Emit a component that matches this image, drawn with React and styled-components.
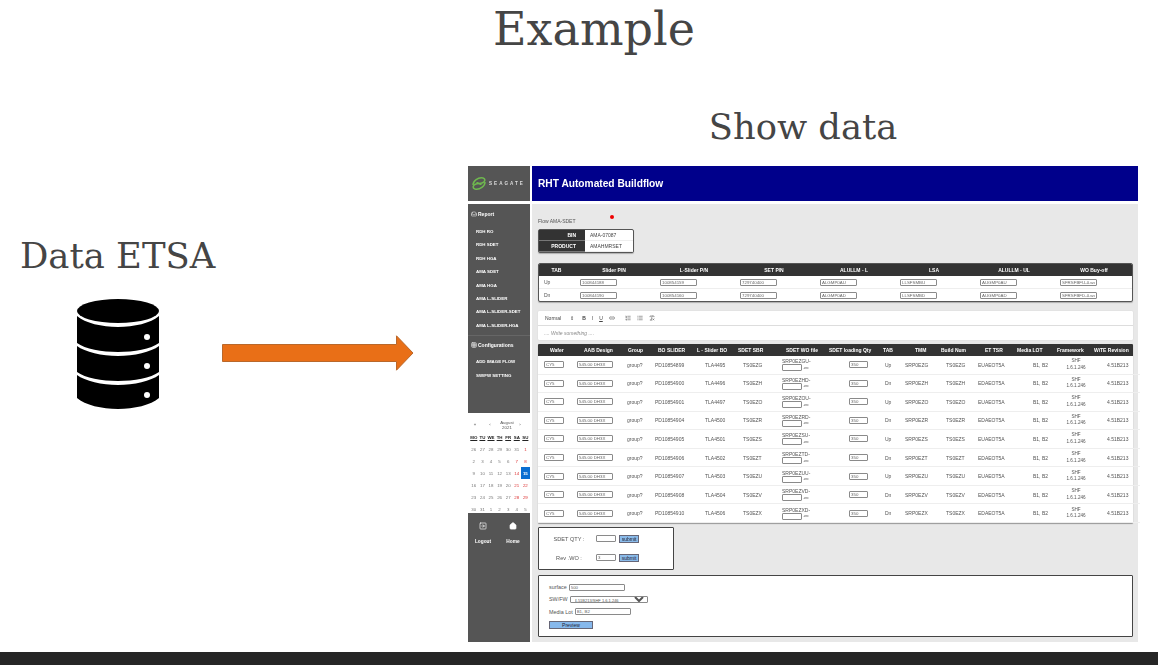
import React from 'react';
import styled, { createGlobalStyle } from 'styled-components';
import { Link2, List, ListOrdered, RemoveFormatting, Grid3x3, SquareArrowRight, Home, Inbox } from 'lucide-react';

const Global = createGlobalStyle`
    html, body { margin: 0; padding: 0; background: #fff; overflow: hidden; }
    * { box-sizing: border-box; }
`

const Page = styled.div`
    width: 1158px;
    height: 665px;
    display: flex;
    flex-direction: column;
    font-family: "Liberation Sans", Arial, sans-serif;
`

const Slide = styled.div`
    height: 652px;
    flex: none;
`

const SlideTitle = styled.div`
    font-family: "DejaVu Serif", serif;
    color: #454545;
    font-size: ${p => p.size}px;
    line-height: 1;
    white-space: nowrap;
`

const TitleRow = styled.div`
    height: 104px;
    padding: 6px 0 0 493px;
`

const Stage = styled.div`
    display: flex;
    align-items: flex-start;
`

const DataColumn = styled.div`
    width: 222px;
    flex: none;
    padding: 134px 0 0 20px;
`

const DbIcon = styled.svg`
    display: block;
    margin: 26px 0 0 57px;
`

const ArrowIcon = styled.svg`
    display: block;
    flex: none;
    margin-top: 231px;
`

const ShowColumn = styled.div`
    width: 670px;
    margin-left: 54px;
    flex: none;
`

const ShowLabel = styled.div`
    height: 62px;
    padding-top: 5px;
    display: flex;
    justify-content: center;
`

const Mock = styled.div`
    width: 670px;
    height: 476px;
    display: grid;
    grid-template-columns: 62px 606px;
    column-gap: 2px;
    grid-template-rows: 35px 438px;
    row-gap: 3px;
    filter: blur(0.4px);
    color: #333;
    font-size: 5px;
`

const LogoCell = styled.div`
    background: #555;
    display: flex;
    align-items: center;
    gap: 3px;
    padding-left: 4px;
`

const LogoText = styled.span`
    color: #ddd;
    font-size: 4.6px;
    letter-spacing: 2px;
    font-weight: 700;
`

const Header = styled.div`
    background: #00008b;
    color: #fff;
    font-size: 10.2px;
    font-weight: 700;
    display: flex;
    align-items: center;
    padding-left: 6px;
`

const Sidebar = styled.div`
    display: flex;
    flex-direction: column;
    background: #555;
    color: #fff;
`

const NavPart = styled.div`
    height: 209px;
    flex: none;
    padding-top: 4px;
`

const NavGroup = styled.div`
    display: flex;
    align-items: center;
    gap: 1px;
    height: 11px;
    padding-left: 3px;
    font-weight: 700;
    font-size: 5px;
`

const NavDivider = styled.div`
    height: 1px;
    background: #666;
    margin: 3px 0;
`

const NavItem = styled.div`
    height: 13.4px;
    line-height: 13.4px;
    padding-left: 8px;
    font-size: 4.4px;
    font-weight: 700;
    white-space: nowrap;
`

const NavList = styled.div`
    margin-top: ${p => p.top}px;
`

const Calendar = styled.div`
    height: 100px;
    flex: none;
    background: #fff;
    color: #555;
    font-size: 4.4px;
`

const CalNav = styled.div`
    display: grid;
    grid-template-columns: 14px 16px 18px 8px;
    height: 21px;
    padding-top: 3px;
    align-items: center;
    text-align: center;
    line-height: 1.25;
`

const CalGrid = styled.div`
    display: grid;
    grid-template-columns: repeat(7, 8.6px);
    grid-template-rows: 9px;
    grid-auto-rows: 12px;
    padding-left: 1.5px;
`

const CalHead = styled.div`
    font-weight: 700;
    color: #222;
    text-decoration: underline;
    display: flex;
    align-items: center;
    justify-content: center;
    padding-bottom: 3px;
`

const CalDay = styled.div`
    display: flex;
    align-items: center;
    justify-content: center;
    color: ${p => (p.selected ? '#fff' : p.weekend ? '#d33' : '#777')};
    background: ${p => (p.selected ? '#0a6ed1' : 'transparent')};
    font-weight: ${p => (p.selected ? 700 : 400)};
`

const BottomNav = styled.div`
    flex: 1;
    display: grid;
    grid-template-columns: repeat(2, 30px);
    grid-template-rows: 34px;
    padding-top: 9px;
    font-weight: 700;
    font-size: 4.8px;
`

const BottomItem = styled.div`
    display: flex;
    flex-direction: column;
    align-items: center;
    gap: 9px;
`

const Main = styled.div`
    background: #e8e8e8;
    padding: 10px 5px 0 6px;
    display: flex;
    flex-direction: column;
`

const FlowLine = styled.div`
    display: flex;
    height: 13px;
    margin-bottom: 2px;
    align-items: center;
    font-size: 5px;
    color: #555;
`

const RedDot = styled.span`
    width: 4px;
    height: 4px;
    border-radius: 50%;
    background: #ee0000;
    margin: -8px 0 0 34px;
`

const Card = styled.div`
    background: #fff;
    border: 1px solid #555;
    border-radius: 2px;
    box-shadow: 0 1px 1px rgba(0, 0, 0, 0.25);
`

const InfoCard = styled(Card)`
    width: 96px;
    height: 24px;
    display: grid;
    grid-template-columns: 46px 1fr;
    grid-auto-rows: 1fr;
`

const InfoKey = styled.div`
    background: #333;
    color: #fff;
    font-weight: 700;
    display: flex;
    align-items: center;
    justify-content: flex-end;
    padding-right: 9px;
    border-bottom: 1px solid #777;
`

const InfoValue = styled.div`
    display: flex;
    align-items: center;
    padding-left: 5px;
    border-bottom: 1px solid #eee;
    color: #444;
`

const PinCard = styled(Card)`
    margin-top: 10px;
    height: 39px;
    overflow: hidden;
`

const PinRow = styled.div`
    display: grid;
    grid-template-columns: 35px repeat(7, 80px);
    height: ${p => (p.head ? 12 : 13)}px;
    align-items: center;
    background: ${p => (p.head ? '#333' : 'transparent')};
    color: ${p => (p.head ? '#fff' : '#555')};
    font-weight: ${p => (p.head ? 700 : 400)};
    text-align: ${p => (p.head ? 'center' : 'left')};
    border-bottom: ${p => (p.head ? 'none' : '1px solid #eee')};
`

const PinKey = styled.div`
    padding-left: 5px;
`

const PinCell = styled.div`
    padding-left: 6px;
`

const Field = styled.input.attrs({ spellCheck: false, readOnly: true })`
    display: block;
    width: ${p => p.w}px;
    height: ${p => p.h || 7}px;
    padding: 0 1px;
    margin: 0;
    font: 4.4px "Liberation Sans", sans-serif;
    color: #666;
    background: #fff;
    border: 1px solid #8a8a8a;
    border-radius: 1px;
    outline: none;
`

const Editor = styled.div`
    margin-top: 9px;
    height: 29px;
    background: #fff;
    border-radius: 1px;
    box-shadow: 0 0 1px rgba(0, 0, 0, 0.2);
`

const EditorTools = styled.div`
    height: 15px;
    display: flex;
    align-items: center;
    gap: 6px;
    padding-left: 7px;
    border-bottom: 1px solid #ddd;
    color: #444;
`

const ToolText = styled.span`
    font-weight: ${p => (p.bold ? 700 : 400)};
    font-style: ${p => (p.italic ? 'italic' : 'normal')};
    text-decoration: ${p => (p.under ? 'underline' : 'none')};
    margin-right: ${p => p.gap || 0}px;
`

const ToolSpacer = styled.span`
    width: 4px;
    margin-left: -6px;
`

const EditorBody = styled.div`
    height: 14px;
    display: flex;
    align-items: center;
    padding-left: 6px;
    font-style: italic;
    color: #888;
`

const DataCard = styled.div`
    margin-top: 4px;
    height: 179px;
    background: #fff;
    border-radius: 1px;
    box-shadow: 0 1px 1px rgba(0, 0, 0, 0.35);
    display: flex;
    flex-direction: column;
`

const headCols = '12px 34px 44px 30px 39px 41px 48px 43px 54px 32px 26px 44px 32px 40px 37px 39px'
const bodyCols = '6px 33px 50px 28px 50px 38px 39px 67px 36px 20px 41px 32px 55px 30px 44px 33px'

const DataHead = styled.div`
    height: 12px;
    flex: none;
    display: grid;
    grid-template-columns: ${headCols};
    align-items: center;
    background: #333;
    color: #fff;
    font-weight: 700;
    white-space: nowrap;
    border-radius: 1px 1px 0 0;
`

const DataRows = styled.div`
    flex: 1;
    display: grid;
    grid-auto-rows: 1fr;
`

const DataRow = styled.div`
    display: grid;
    grid-template-columns: ${bodyCols};
    align-items: center;
    color: #555;
    white-space: nowrap;
    border-bottom: 1px solid #eee;
`

const WoCell = styled.div`
    line-height: 6px;
`

const WoInput = styled.div`
    display: flex;
    align-items: center;
    gap: 1px;
    font-size: 3.5px;
`

const StackCell = styled.div`
    text-align: center;
    width: 26px;
    line-height: 6.5px;
    font-size: 4.6px;
`

const FormBox = styled.div`
    background: #fff;
    border: 1px solid #444;
    border-radius: 1px;
`

const QtyBox = styled(FormBox)`
    width: 136px;
    height: 43px;
    margin-top: 4px;
    display: grid;
    grid-template-columns: 57px 23px 1fr;
    grid-template-rows: 19px 19px;
    padding-top: 1px;
    align-items: center;
`

const QtyLabel = styled.div`
    text-align: center;
    padding-left: 3px;
    font-size: 5.6px;
    color: #555;
`

const SubmitBtn = styled.button`
    width: 20px;
    height: 8px;
    padding: 0;
    font: 5px "Liberation Sans", sans-serif;
    color: #223;
    background: #8abbea;
    border: 1px solid #667;
`

const PreviewBox = styled(FormBox)`
    height: 62px;
    margin-top: 5px;
    padding: 7px 0 0 10px;
    display: flex;
    flex-direction: column;
    align-items: flex-start;
    gap: 4.4px;
`

const FormLine = styled.div`
    display: flex;
    align-items: center;
    gap: 2px;
    height: 8px;
    font-size: 5.4px;
    color: #555;
`

const SelectBox = styled.select`
    width: 78px;
    height: 7px;
    padding: 0;
    font: 4px "Liberation Sans", sans-serif;
    color: #555;
    background: #fff;
    border: 1px solid #8a8a8a;
    border-radius: 1px;
`

const PreviewBtn = styled.button`
    width: 44px;
    height: 8px;
    padding: 0;
    font: 5px "Liberation Sans", sans-serif;
    color: #223;
    background: #86b8ec;
    border: 1px solid #667;
    margin-top: 1px;
`

const FootBar = styled.div`
    flex: 1;
    background: #262626;
`

const pinRows = [
    ['Up', '100844188', '100854159', '729740400', 'ALGMP0AU', 'LLSFSMBU', 'AUGMP0AU', 'SFRSFBFU-0.wo'],
    ['Dn', '100844190', '100854160', '729740400', 'ALGMP0AD', 'LLSFSMBD', 'AUGMP0AD', 'SFRSFBFD-0.wo'],
]

const rows = [
    ['899', '4495', 'G', 'GU', 'Up'],
    ['900', '4496', 'H', 'HD', 'Dn'],
    ['901', '4497', 'O', 'OU', 'Up'],
    ['904', '4500', 'R', 'RD', 'Dn'],
    ['905', '4501', 'S', 'SU', 'Up'],
    ['906', '4502', 'T', 'TD', 'Dn'],
    ['907', '4503', 'U', 'UU', 'Up'],
    ['908', '4504', 'V', 'VD', 'Dn'],
    ['910', '4506', 'X', 'XD', 'Dn'],
]

const heads = ['Wafer', 'AAB  Design', 'Group', 'BO SLIDER', 'L - Slider BO', 'SDET SBR', 'SDET WO file', 'SDET loading Qty', 'TAB', 'TMM', 'Build Num', 'ET TSR', 'Media LOT', 'Framework', 'WiTE Revision']

const calDays = [26, 27, 28, 29, 30, 31, 1, 2, 3, 4, 5, 6, 7, 8, 9, 10, 11, 12, 13, 14, 15, 16, 17, 18, 19, 20, 21, 22, 23, 24, 25, 26, 27, 28, 29, 30, 31, 1, 2, 3, 4, 5]

const navItems = ['RDH RO', 'RDH SDET', 'RDH HGA', 'AMA SDET', 'AMA HGA', 'AMA L-SLIDER', 'AMA L-SLIDER-SDET', 'AMA L-SLIDER-HGA']

const Logo = () => (
    <svg width="14" height="13" viewBox="0 0 14 13" fill="none" stroke="#6fb84f" strokeWidth="1.5">
        <path d="M1 8C1 4 6 0 11 1c3 1 2 4-1 5-3 1-5 0-5-1" />
        <path d="M13 5c0 4-5 8-10 7-3-1-2-4 1-5 3-1 5 0 5 1" />
    </svg>
)

const Database = () => (
    <DbIcon width="82" height="110" viewBox="0 0 82 110">
        <ellipse cx="41" cy="12" rx="41" ry="12" />
        <path d="M0 17C8 24 25 28 41 28S74 24 82 17V44C74 50 57 53 41 53S8 50 0 44Z" />
        <path d="M0 47C8 53 25 57 41 57S74 53 82 47V73C74 79 57 82 41 82S8 79 0 73Z" />
        <path d="M0 76C8 82 25 86 41 86S74 82 82 76V99C74 106 57 110 41 110S8 106 0 99Z" />
        <circle cx="70" cy="38" r="3" fill="#fff" />
        <circle cx="70" cy="67" r="3" fill="#fff" />
        <circle cx="70" cy="96" r="3" fill="#fff" />
    </DbIcon>
)

const Arrow = () => (
    <ArrowIcon width="192" height="36" viewBox="0 0 192 36">
        <path d="M.5 9.5H174.5V.8L191 18 174.5 35.2V26.5H.5Z" fill="#e96f17" stroke="#b9682b" />
    </ArrowIcon>
)

const App = () => (
    <Page>
        <Global />
        <Slide>
            <TitleRow>
                <SlideTitle size={46}>Example</SlideTitle>
            </TitleRow>
            <Stage>
                <DataColumn>
                    <SlideTitle size={35.4}>Data ETSA</SlideTitle>
                    <Database />
                </DataColumn>
                <Arrow />
                <ShowColumn>
                    <ShowLabel>
                        <SlideTitle size={35.3}>Show data</SlideTitle>
                    </ShowLabel>
                    <Mock>
                        <LogoCell>
                            <Logo />
                            <LogoText>SEAGATE</LogoText>
                        </LogoCell>
                        <Header>RHT Automated Buildflow</Header>
                        <Sidebar>
                            <NavPart>
                                <NavGroup><Inbox size={6} />Report</NavGroup>
                                <NavList top={6}>
                                    {navItems.map(n => <NavItem key={n}>{n}</NavItem>)}
                                </NavList>
                                <NavDivider />
                                <NavGroup><Grid3x3 size={6} />Configurations</NavGroup>
                                <NavList top={5}>
                                    <NavItem>ADD IMAGE FLOW</NavItem>
                                    <NavItem>SW/FW SETTING</NavItem>
                                </NavList>
                            </NavPart>
                            <Calendar>
                                <CalNav>
                                    <span>«</span>
                                    <span>‹</span>
                                    <span>August<br />2021</span>
                                    <span>›</span>
                                </CalNav>
                                <CalGrid>
                                    {['MO', 'TU', 'WE', 'TH', 'FR', 'SA', 'SU'].map(d => <CalHead key={d}>{d}</CalHead>)}
                                    {calDays.map((d, i) => (
                                        <CalDay
                                            key={i}
                                            selected={i === 20}
                                            weekend={i % 7 >= 5 && i < 35 && i !== 5}
                                        >
                                            {d}
                                        </CalDay>
                                    ))}
                                </CalGrid>
                            </Calendar>
                            <BottomNav>
                                <BottomItem><SquareArrowRight size={8} />Logout</BottomItem>
                                <BottomItem><Home size={8} fill="#fff" />Home</BottomItem>
                            </BottomNav>
                        </Sidebar>
                        <Main>
                            <FlowLine>Flow AMA-SDET<RedDot /></FlowLine>
                            <InfoCard>
                                <InfoKey>BIN</InfoKey>
                                <InfoValue>AMA-07087</InfoValue>
                                <InfoKey>PRODUCT</InfoKey>
                                <InfoValue>AMAHMRSET</InfoValue>
                            </InfoCard>
                            <PinCard>
                                <PinRow head>
                                    {['TAB', 'Slider P/N', 'L-Slider P/N', 'SET P/N', 'ALULLM - L', 'LSA', 'ALULLM - UL', 'WO Buy-off'].map(h => (
                                        <div key={h}>{h}</div>
                                    ))}
                                </PinRow>
                                {pinRows.map(r => (
                                    <PinRow key={r[0]}>
                                        <PinKey>{r[0]}</PinKey>
                                        {r.slice(1).map((v, i) => (
                                            <PinCell key={i}><Field w={37} defaultValue={v} /></PinCell>
                                        ))}
                                    </PinRow>
                                ))}
                            </PinCard>
                            <Editor>
                                <EditorTools>
                                    <ToolText gap={3}>Normal</ToolText>
                                    <ToolText gap={2}>⇕</ToolText>
                                    <ToolText bold>B</ToolText>
                                    <ToolText italic>I</ToolText>
                                    <ToolText under>U</ToolText>
                                    <Link2 size={6} />
                                    <ToolSpacer />
                                    <ListOrdered size={6} />
                                    <List size={6} />
                                    <RemoveFormatting size={6} />
                                </EditorTools>
                                <EditorBody>.... Write something ....</EditorBody>
                            </Editor>
                            <DataCard>
                                <DataHead>
                                    <span />
                                    {heads.map(h => <span key={h}>{h}</span>)}
                                </DataHead>
                                <DataRows>
                                    {rows.map(r => {
                                        const tmm = 'SRP0EZ' + r[2]
                                        const up = r[4] === 'Up'
                                        return (
                                            <DataRow key={r[0]}>
                                                <span />
                                                <Field w={20} defaultValue="CY5" />
                                                <Field w={36} defaultValue="545.00 DH3X" />
                                                <span>group?</span>
                                                <span>PD10854{r[0]}</span>
                                                <span>TLA{r[1]}</span>
                                                <span>TS0EZ{r[2]}</span>
                                                <WoCell>
                                                    SRP0EZ{r[3]}-
                                                    <WoInput><Field w={20} />.wo</WoInput>
                                                </WoCell>
                                                <Field w={19} defaultValue="350" />
                                                <span>{r[4]}</span>
                                                <span>{tmm}</span>
                                                <span>TS0EZ{r[2]}</span>
                                                <span>{up ? 'EUAEOT5A' : 'EDAEOT5A'}</span>
                                                <span>B1, B2</span>
                                                <StackCell>SHF<br />1.6.1.246</StackCell>
                                                <span>4.51B213</span>
                                            </DataRow>
                                        )
                                    })}
                                </DataRows>
                            </DataCard>
                            <QtyBox>
                                <QtyLabel>SDET QTY :</QtyLabel>
                                <Field w={20} />
                                <SubmitBtn>submit</SubmitBtn>
                                <QtyLabel>Rev .WO :</QtyLabel>
                                <Field w={20} defaultValue="3" />
                                <SubmitBtn>submit</SubmitBtn>
                            </QtyBox>
                            <PreviewBox>
                                <FormLine>surface <Field w={56} defaultValue="500" /></FormLine>
                                <FormLine>
                                    SW/FW
                                    <SelectBox defaultValue="a">
                                        <option value="a">4.51B213/SHF 1.6.1.246</option>
                                    </SelectBox>
                                </FormLine>
                                <FormLine>Media Lot <Field w={56} defaultValue="B1, B2" /></FormLine>
                                <PreviewBtn>Preview</PreviewBtn>
                            </PreviewBox>
                        </Main>
                    </Mock>
                </ShowColumn>
            </Stage>
        </Slide>
        <FootBar />
    </Page>
)

export default App
